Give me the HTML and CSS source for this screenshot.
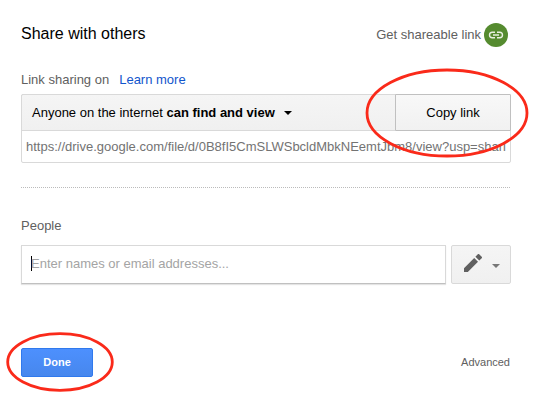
FILE: index.html
```html
<!DOCTYPE html>
<html lang="en">
<head>
<meta charset="utf-8">
<title>Share with others</title>
<link rel="stylesheet" href="styles.css">
</head>
<body>
<main class="dialog">
  <header class="header">
    <h1 class="title">Share with others</h1>
    <div class="shareable">
      <span class="shareable-text">Get shareable link</span>
      <svg class="link-icon" viewBox="0 0 24 24"><circle cx="12" cy="12" r="12" fill="#558b2f"/><path d="M11 9.2H8.3a2.8 2.8 0 0 0 0 5.6H11M13 9.2h2.7a2.8 2.8 0 0 1 0 5.6H13M9 12h6" fill="none" stroke="#e8f0e0" stroke-width="1.4"/></svg>
    </div>
  </header>
  <div class="link-label"><span class="sharing">Link sharing on</span><a class="learn">Learn more</a></div>
  <section class="link-box">
    <div class="link-bar">
      <div class="access"><span class="access-text">Anyone on the internet <b>can find and view</b></span><i class="caret"></i></div>
      <button class="copy"><span class="copy-text">Copy link</span></button>
    </div>
    <div class="url"><span class="url-text">https://drive.google.com/file/d/0B8fI5CmSLWSbcldMbkNEemtJbm8/view?usp=shari</span></div>
  </section>
  <hr class="divider">
  <div class="people-label"><span class="people">People</span></div>
  <div class="people-row">
    <div class="names"><i class="cursor"></i><span class="placeholder">Enter names or email addresses...</span></div>
    <button class="edit">
      <svg class="pencil" viewBox="0 0 18 18"><path d="M0 14.2V18h3.8L14 7.8 10.2 4zM17.7 4.2a1 1 0 0 0 0-1.4L15.2.3a1 1 0 0 0-1.4 0L11.4 2.7l3.9 3.9z" fill="#606060"/></svg>
      <i class="caret muted"></i>
    </button>
  </div>
  <footer class="footer">
    <button class="done"><span class="done-text">Done</span></button>
    <a class="advanced">Advanced</a>
  </footer>
</main>
<svg class="marks" viewBox="0 0 534 403"><ellipse cx="447" cy="113" rx="80" ry="43"/><ellipse cx="60" cy="362" rx="52.3" ry="28.3"/></svg>
</body>
</html>
```
FILE: styles.css
```css
* { box-sizing: border-box; }
body {
  margin: 0;
  width: 534px;
  height: 403px;
  overflow: hidden;
  background: #fff;
  font: 13px/16px "Liberation Sans", Arial, sans-serif;
  color: #606060;
}
button { font: inherit; padding: 0; margin: 0; }
.dialog { padding: 23px 23px 0 21px; }
.header { display: flex; justify-content: space-between; height: 24px; padding-right: 3px; }
.title { margin: 0; font-size: 16px; font-weight: 400; line-height: 22px; color: #000; }
.shareable { display: flex; align-items: center; gap: 3px; }
.link-icon { width: 24px; height: 24px; }
.link-label { display: flex; gap: 10px; margin-top: 25px; height: 22px; }
.learn { color: #15c; }
.link-box { width: 490px; height: 69px; border: 1px solid #d9d9d9; border-radius: 2px; }
.link-bar {
  display: flex;
  justify-content: space-between;
  height: 37px;
  margin: -1px;
  border: 1px solid #d9d9d9;
  border-radius: 2px 2px 0 0;
  background: linear-gradient(#f5f5f5, #f0f0f0);
}
.access { display: flex; align-items: center; gap: 9px; padding-left: 10px; color: #000; }
.caret { border: 4px solid transparent; border-top-color: #000; border-bottom: 0; }
.caret.muted { border-top-color: #777; }
.copy {
  width: 116px;
  height: 37px;
  margin: -1px;
  border: 1px solid #c0c0c0;
  border-radius: 1px;
  background: linear-gradient(#f8f8f8, #f1f1f1);
  color: #000;
}
.url { height: 31px; margin: 1px 4px 0; line-height: 31px; overflow: hidden; white-space: nowrap; color: #737373; }
.divider { width: 490px; height: 1px; margin: 24px 0 30px; border: 0; background: repeating-linear-gradient(90deg, #bbb 0 1px, #fff 1px 2px); }
.people-label { height: 27px; }
.people-row { display: flex; gap: 5px; height: 39px; }
.names {
  display: flex;
  align-items: center;
  width: 425px;
  padding: 0 9px 2px;
  border: 1px solid #d9d9d9;
  border-bottom-color: #c0c0c0;
  box-shadow: 0 1px 1px #e4e4e4;
  color: #a4a4a4;
}
.cursor { width: 1px; height: 15px; margin-right: -1px; background: #000; }
.edit {
  display: flex;
  align-items: center;
  gap: 10px;
  width: 60px;
  padding-left: 12px;
  border: 1px solid #d9d9d9;
  border-radius: 2px;
  background: linear-gradient(#f5f5f5, #f0f0f0);
}
.pencil { width: 18px; height: 18px; margin-top: -3px; }
.edit .caret { margin-top: 3px; }
.footer { display: flex; justify-content: space-between; align-items: center; width: 489px; height: 29px; margin-top: 64px; font-size: 11px; }
.advanced { margin-top: -2px; }
.done {
  width: 72px;
  height: 29px;
  border: 1px solid #3079ed;
  border-radius: 2px;
  background: linear-gradient(#4d90fe, #4787ed);
  color: #fff;
  font-weight: 700;
}
.done-text { display: block; margin-top: -2px; }
.marks { position: absolute; left: 0; top: 0; width: 534px; height: 403px; fill: none; stroke: #fa2a1a; stroke-width: 2.8; pointer-events: none; }
```
